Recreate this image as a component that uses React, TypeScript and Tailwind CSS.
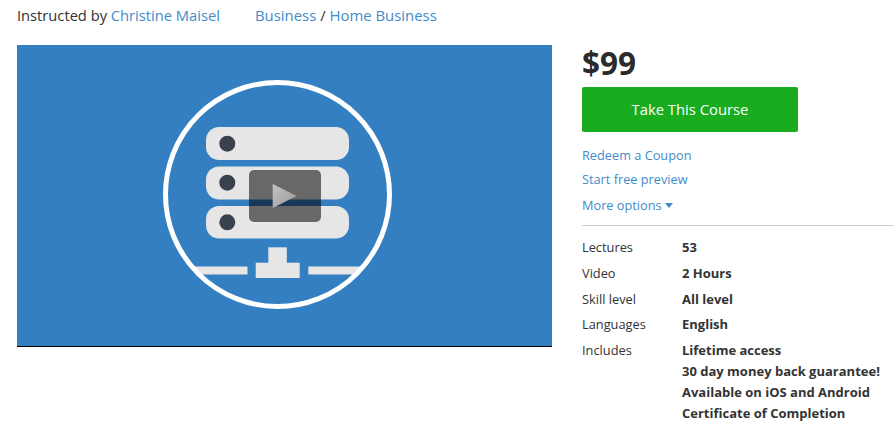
const rows: [string, string[]][] = [
  ["Lectures", ["53"]],
  ["Video", ["2 Hours"]],
  ["Skill level", ["All level"]],
  ["Languages", ["English"]],
  ["Includes", ["Lifetime access", "30 day money back guarantee!", "Available on iOS and Android", "Certificate of Completion"]],
];

function Thumbnail() {
  return (
    <svg viewBox="0 0 535 301" width="535" height="301" className="block">
      <defs>
        <clipPath id="inner">
          <circle cx="260.5" cy="149.5" r="112" />
        </clipPath>
        <linearGradient id="tri" x1="0" y1="0" x2="1" y2="1">
          <stop offset="0" stopColor="#c4c4c4" />
          <stop offset="1" stopColor="#9a9a9a" />
        </linearGradient>
      </defs>
      <rect width="535" height="301" fill="#337fc1" />
      <g fill="#e6e6e6">
        <rect x="189" y="82" width="143" height="33" rx="13" />
        <rect x="189" y="121.500" width="143" height="33" rx="13" />
        <rect x="189" y="161" width="143" height="32.500" rx="13" />
        <g clipPath="url(#inner)">
          <rect x="160" y="221.500" width="70.500" height="8" />
          <rect x="291.300" y="221.500" width="70" height="8" />
        </g>
        <rect x="251.300" y="202.300" width="18.500" height="16" />
        <rect x="238.700" y="217.700" width="44" height="15.300" />
      </g>
      <g fill="#3a4250">
        <circle cx="210.300" cy="98.700" r="8" />
        <circle cx="210.300" cy="137.700" r="8" />
        <circle cx="210.300" cy="177.300" r="8" />
      </g>
      <circle cx="260.500" cy="149.500" r="112" fill="none" stroke="#ffffff" strokeWidth="5" />
      <rect x="232" y="125" width="72" height="52" rx="5" fill="#000000" fillOpacity="0.55" />
      <path d="M255.700 139 L279.700 151 L255.700 163 Z" fill="url(#tri)" />
    </svg>
  );
}

export default function App() {
  return (
    <div className="w-[894px] h-[429px] overflow-hidden bg-white font-['Open_Sans',sans-serif] text-[14.700px] text-[#333333]">
      <div className="flex h-[45px] pl-[17px] pt-[5px] leading-[20px]">
        <div className="w-[238px]">
          Instructed by <a className="text-[#428bca]">Christine Maisel</a>
        </div>
        <div className="text-[14.900px]">
          <a className="text-[#428bca]">Business</a> / <a className="text-[#428bca]">Home Business</a>
        </div>
      </div>
      <div className="flex">
        <div className="ml-[17px] w-[535px] h-[302px] border-b border-black">
          <Thumbnail />
        </div>
        <div className="ml-[30px] flex-1 min-w-0">
          <div className="text-[31.500px] leading-[36px] font-bold text-[#2b2b2b]">$99</div>
          <a className="mt-[6px] flex h-[45px] w-[216px] items-center justify-center rounded-[2px] bg-[#19ac1e] text-[14.800px] text-white">
            Take This Course
          </a>
          <div className="mt-[14px] text-[12.750px] leading-[18px] text-[#428bca]">
            <div>Redeem a Coupon</div>
            <div className="mt-[6px]">Start free preview</div>
            <div className="mt-[8px] flex items-center gap-[3px]">
              More options
              <svg width="8" height="5" viewBox="0 0 8 5">
                <path d="M0 0 H8 L4 5 Z" fill="#428bca" />
              </svg>
            </div>
          </div>
          <div className="mt-[11px] border-t border-[#cccccc] pt-[12px] text-[12.800px] leading-[18px]">
            {rows.map(([label, values]) => (
              <div key={label} className="mb-[7.750px] flex">
                <div className="w-[100px] shrink-0">{label}</div>
                <div className="font-bold text-[13px] flex flex-col gap-[3px]">
                  {values.map((v) => (
                    <div key={v}>{v}</div>
                  ))}
                </div>
              </div>
            ))}
          </div>
        </div>
      </div>
    </div>
  );
}
